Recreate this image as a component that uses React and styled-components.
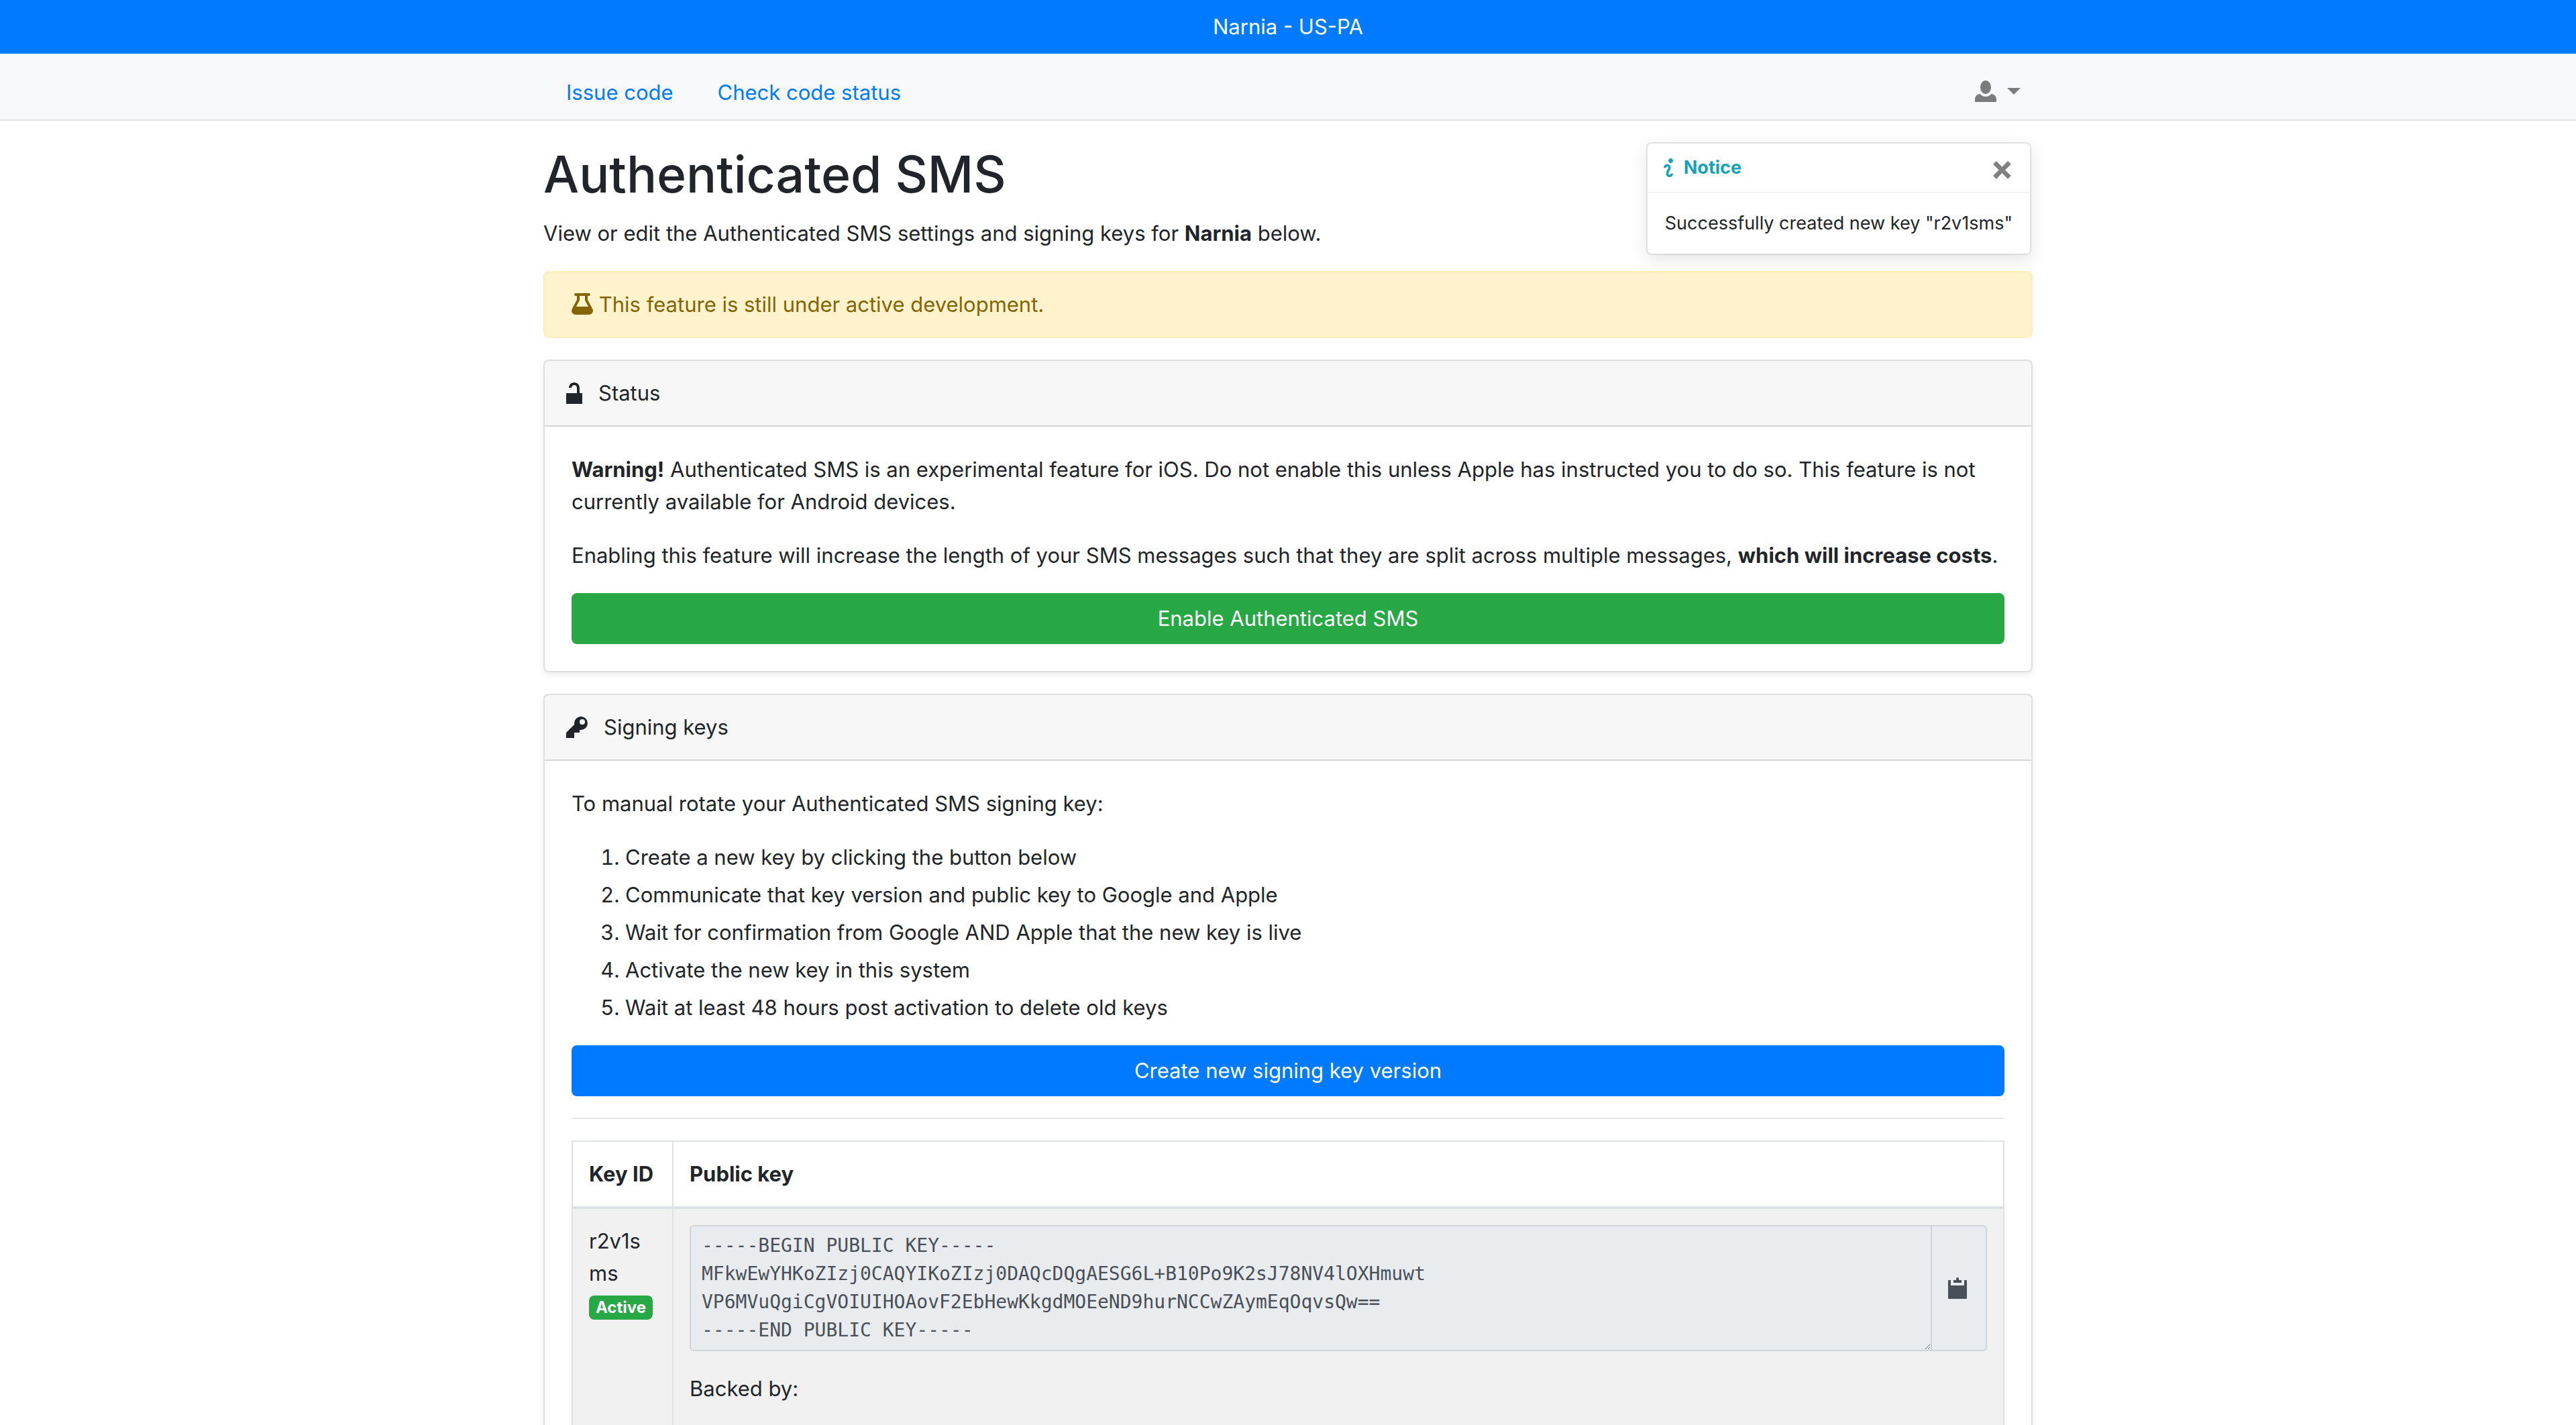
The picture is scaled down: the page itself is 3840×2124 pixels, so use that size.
import React, { useState } from "react";
import styled, { createGlobalStyle, css } from "styled-components";

const GlobalStyle = createGlobalStyle`
  *, *::before, *::after { box-sizing: border-box; }
  html { scrollbar-width: none; }
  body {
    margin: 0;
    background: #fff;
    color: #212529;
    font-family: Inter, "Liberation Sans", sans-serif;
    font-size: 31px;
    line-height: 48px;
  }
  strong, th { font-weight: 700; }
`;

const Container = styled.div`
  width: 100%;
  max-width: 2220px;
  margin: 0 auto;
`;

const Banner = styled.header`
  padding: 16px;
  background: #007bff;
  color: #fff;
  text-align: center;
`;

const NavBar = styled.nav`
  padding-top: 16px;
  background: #f8f9fa;
  border-bottom: 2px solid #dee2e6;
`;

const NavRow = styled(Container)`
  display: flex;
  justify-content: space-between;
`;

const NavGroup = styled.div`
  display: flex;
`;

const NavLink = styled.a`
  padding: 18px 34px 16px;
  color: #007bff;
  text-decoration: none;

  & + & { padding-left: 32px; }
`;

const UserMenu = styled.button`
  display: flex;
  align-items: center;
  gap: 16px;
  padding: 0 18px 2px;
  border: 0;
  background: none;
  color: #7c7c7d;
`;

const Caret = styled.span`
  border: 10px solid transparent;
  border-top-color: currentColor;
  border-bottom: 0;
`;

const Page = styled(Container)`
  position: relative;
  padding-top: 32px;
`;

const Title = styled.h1`
  margin: 0 0 16px;
  font-size: 75px;
  line-height: 96px;
  font-weight: 500;
`;

const Text = styled.p`
  margin: 0 0 32px;
`;

const Alert = styled.div`
  margin-bottom: 32px;
  padding: 24px 40px;
  border: 2px solid #ffeeba;
  border-radius: 8px;
  background: #fff3cd;
  color: #856404;
`;

const Card = styled.section`
  margin-bottom: 32px;
  border: 2px solid rgba(0, 0, 0, 0.125);
  border-radius: 8px;
  background: #fff;
  background-clip: border-box;
  box-shadow: 0 4px 8px rgba(0, 0, 0, 0.075);
`;

const CardHeader = styled.h2`
  display: flex;
  align-items: center;
  gap: 24px;
  margin: 0;
  padding: 24px 32px;
  border-bottom: 2px solid rgba(0, 0, 0, 0.125);
  background: rgba(0, 0, 0, 0.03);
  font-size: inherit;
  font-weight: 400;
`;

const CardBody = styled.div`
  padding: 40px;
`;

const Button = styled.button`
  display: block;
  width: 100%;
  padding: 14px 26px;
  border: 0;
  border-radius: 8px;
  background: ${(p) => (p.$tone === "success" ? "#28a745" : "#007bff")};
  color: #fff;
  font: inherit;
  cursor: pointer;
`;

const Steps = styled.ol`
  display: grid;
  gap: 8px;
  margin: 0 0 32px;
  padding-left: 80px;
`;

const Divider = styled.hr`
  margin: 32px 0;
  border: 0;
  border-top: 2px solid rgba(0, 0, 0, 0.1);
`;

const KeyTable = styled.table`
  width: 100%;
  border-collapse: separate;
  border-spacing: 0;
  border: 2px solid #dee2e6;
  border-bottom: 0;
`;

const cell = css`
  padding: 24px;
  text-align: left;
  vertical-align: top;
`;

const HeadCell = styled.th`
  ${cell}
  border-bottom: 4px solid #dee2e6;
  white-space: nowrap;

  & + & { border-left: 2px solid #dee2e6; }
  &:first-child { width: 148px; }
`;

const Cell = styled.td`
  ${cell}
  background: #f1f1f1;
  word-break: break-all;

  & + & { border-left: 2px solid #dee2e6; }
`;

const Badge = styled.span`
  display: inline-block;
  padding: 6px 10px;
  border-radius: 8px;
  background: #28a745;
  color: #fff;
  font-size: 24px;
  line-height: 24px;
  font-weight: 700;
`;

const KeyGroup = styled.div`
  display: flex;
  margin-bottom: 32px;
`;

const KeyText = styled.textarea`
  flex: 1;
  height: 188px;
  padding: 8px 16px;
  border: 2px solid #ced4da;
  border-radius: 6px 0 0 6px;
  background: #e9ecef;
  color: #495057;
  font: 28px/42px "DejaVu Sans Mono", monospace;
  overflow: hidden;
  resize: vertical;
  outline: 0;
`;

const CopyButton = styled.button`
  display: grid;
  place-items: center;
  padding: 0 28px 0 24px;
  border: 2px solid #ced4da;
  border-left: 0;
  border-radius: 0 6px 6px 0;
  background: #e9ecef;
  color: #495057;
  cursor: pointer;
`;

const Toast = styled.div`
  position: absolute;
  top: 32px;
  right: 2px;
  border: 2px solid rgba(0, 0, 0, 0.1);
  border-radius: 8px;
  background: #fff;
  background-clip: padding-box;
  box-shadow: 0 8px 24px rgba(0, 0, 0, 0.1);
  font-size: 27px;
  line-height: 42px;
`;

const ToastHeader = styled.div`
  display: flex;
  align-items: center;
  gap: 16px;
  padding: 12px 24px;
  border-bottom: 2px solid rgba(0, 0, 0, 0.05);
  color: #17a2b8;
`;

const CloseButton = styled.button`
  margin-left: auto;
  padding: 0;
  border: 0;
  background: none;
  color: #808080;
  font: 700 52px/48px Inter, "Liberation Sans", sans-serif;
  cursor: pointer;
`;

const ToastBody = styled.div`
  padding: 24px 26px;
`;

const Glyph = styled.svg`
  display: inline-block;
  flex: none;
  fill: currentColor;
  fill-rule: evenodd;
  vertical-align: ${(p) => (p.$inline ? "-4px" : "middle")};
`;

const ICONS = {
  person: [8, "M4 0C2.9 0 2 1.12 2 2.5S2.9 5 4 5s2-1.12 2-2.5S5.1 0 4 0zM1.91 5C.85 5.05 0 5.92 0 7v1h8V7c0-1.08-.84-1.95-1.91-2-.54.61-1.28 1-2.09 1-.81 0-1.55-.39-2.09-1z"],
  info: [4, "M3 0c-.55 0-1 .45-1 1s.45 1 1 1 1-.45 1-1-.45-1-1-1zM1.5 2.5C.67 2.5 0 3.17 0 4h1c0-.28.22-.5.5-.5s.5.22.5.5-1 1.64-1 2.5C1 7.36 1.67 8 2.5 8S4 7.33 4 6.5H3c0 .28-.22.5-.5.5S2 6.78 2 6.5c0-.36 1-1.84 1-2.5 0-.81-.67-1.5-1.5-1.5z"],
  beaker: [8, "M1.5 0a.5.5 0 0 0 0 1H2v1.41c-.26.53-.81 1.54-1.34 2.53C.31 5.6 0 6.18 0 6.5A1.5 1.5 0 0 0 1.5 8h5A1.5 1.5 0 0 0 8 6.5c0-.32-.31-.9-.66-1.56C6.81 3.95 6.26 2.94 6 2.41V1h.5a.5.5 0 0 0 0-1zM3 1h2v1.66l.06.09S5.67 3.89 6.25 5h-4.5c.58-1.11 1.19-2.25 1.19-2.25L3 2.66z"],
  unlocked: [6, "M3 0C1.9 0 1 .9 1 2h1c0-.56.44-1 1-1s1 .44 1 1v2H0v4h6V4H5V2C5 .9 4.1 0 3 0z"],
  key: [8, "M5.5 0A2.5 2.5 0 0 0 3 2.5c0 .16 0 .32.03.47L0 6v2h3V6h2V5h.5a2.5 2.5 0 0 0 0-5zM6 1a1 1 0 1 1 0 2 1 1 0 0 1 0-2z"],
  clipboard: [7, "M3.5 0a.5.5 0 0 0-.5.5V1H2v1h3V1H4V.5a.5.5 0 0 0-.5-.5zM.25 1A.25.25 0 0 0 0 1.25v6.5c0 .14.11.25.25.25h6.5c.14 0 .25-.11.25-.25v-6.5A.25.25 0 0 0 6.75 1H6v2H1V1z"],
};

function Icon({ name, size = 32, inline }) {
  const [units, d] = ICONS[name];
  return (
    <Glyph $inline={inline} width={(units * size) / 8} height={size} viewBox={`0 0 ${units} 8`} aria-hidden="true">
      <path d={d} />
    </Glyph>
  );
}

const STEPS = [
  "Create a new key by clicking the button below",
  "Communicate that key version and public key to Google and Apple",
  "Wait for confirmation from Google AND Apple that the new key is live",
  "Activate the new key in this system",
  "Wait at least 48 hours post activation to delete old keys",
];

const PUBLIC_KEY = `-----BEGIN PUBLIC KEY-----
MFkwEwYHKoZIzj0CAQYIKoZIzj0DAQcDQgAESG6L+B10Po9K2sJ78NV4lOXHmuwt
VP6MVuQgiCgVOIUIHOAovF2EbHewKkgdMOEeND9hurNCCwZAymEqOqvsQw==
-----END PUBLIC KEY-----`;

export default function App() {
  const [toastOpen, setToastOpen] = useState(true);

  return (
    <>
      <GlobalStyle />
      <Banner>Narnia - US-PA</Banner>
      <NavBar>
        <NavRow>
          <NavGroup>
            <NavLink href="#issue">Issue code</NavLink>
            <NavLink href="#status">Check code status</NavLink>
          </NavGroup>
          <UserMenu type="button" aria-label="Account menu">
            <Icon name="person" />
            <Caret />
          </UserMenu>
        </NavRow>
      </NavBar>

      <Page as="main">
        <Title>Authenticated SMS</Title>
        <Text>
          View or edit the Authenticated SMS settings and signing keys for <strong>Narnia</strong> below.
        </Text>

        <Alert role="alert">
          <Icon name="beaker" inline /> This feature is still under active development.
        </Alert>

        <Card>
          <CardHeader>
            <Icon name="unlocked" />
            Status
          </CardHeader>
          <CardBody>
            <Text>
              <strong>Warning!</strong> Authenticated SMS is an experimental feature for iOS. Do not enable this unless
              Apple has instructed you to do so. This feature is not currently available for Android devices.
            </Text>
            <Text>
              Enabling this feature will increase the length of your SMS messages such that they are split across
              multiple messages, <strong>which will increase costs</strong>.
            </Text>
            <Button type="button" $tone="success">Enable Authenticated SMS</Button>
          </CardBody>
        </Card>

        <Card>
          <CardHeader>
            <Icon name="key" />
            Signing keys
          </CardHeader>
          <CardBody>
            <Text>To manual rotate your Authenticated SMS signing key:</Text>
            <Steps>
              {STEPS.map((step) => (
                <li key={step}>{step}</li>
              ))}
            </Steps>
            <Button type="button">Create new signing key version</Button>
            <Divider />
            <KeyTable>
              <thead>
                <tr>
                  <HeadCell scope="col">Key ID</HeadCell>
                  <HeadCell scope="col">Public key</HeadCell>
                </tr>
              </thead>
              <tbody>
                <tr>
                  <Cell>
                    r2v1sms <Badge>Active</Badge>
                  </Cell>
                  <Cell>
                    <KeyGroup>
                      <KeyText readOnly rows={4} spellCheck={false} aria-label="Public key" value={PUBLIC_KEY} />
                      <CopyButton type="button" aria-label="Copy public key">
                        <Icon name="clipboard" />
                      </CopyButton>
                    </KeyGroup>
                    <Text>Backed by:</Text>
                  </Cell>
                </tr>
              </tbody>
            </KeyTable>
          </CardBody>
        </Card>

        {toastOpen && (
          <Toast role="status">
            <ToastHeader>
              <Icon name="info" size={28} />
              <strong>Notice</strong>
              <CloseButton type="button" aria-label="Close" onClick={() => setToastOpen(false)}>
                ×
              </CloseButton>
            </ToastHeader>
            <ToastBody>Successfully created new key "r2v1sms"</ToastBody>
          </Toast>
        )}
      </Page>
    </>
  );
}
